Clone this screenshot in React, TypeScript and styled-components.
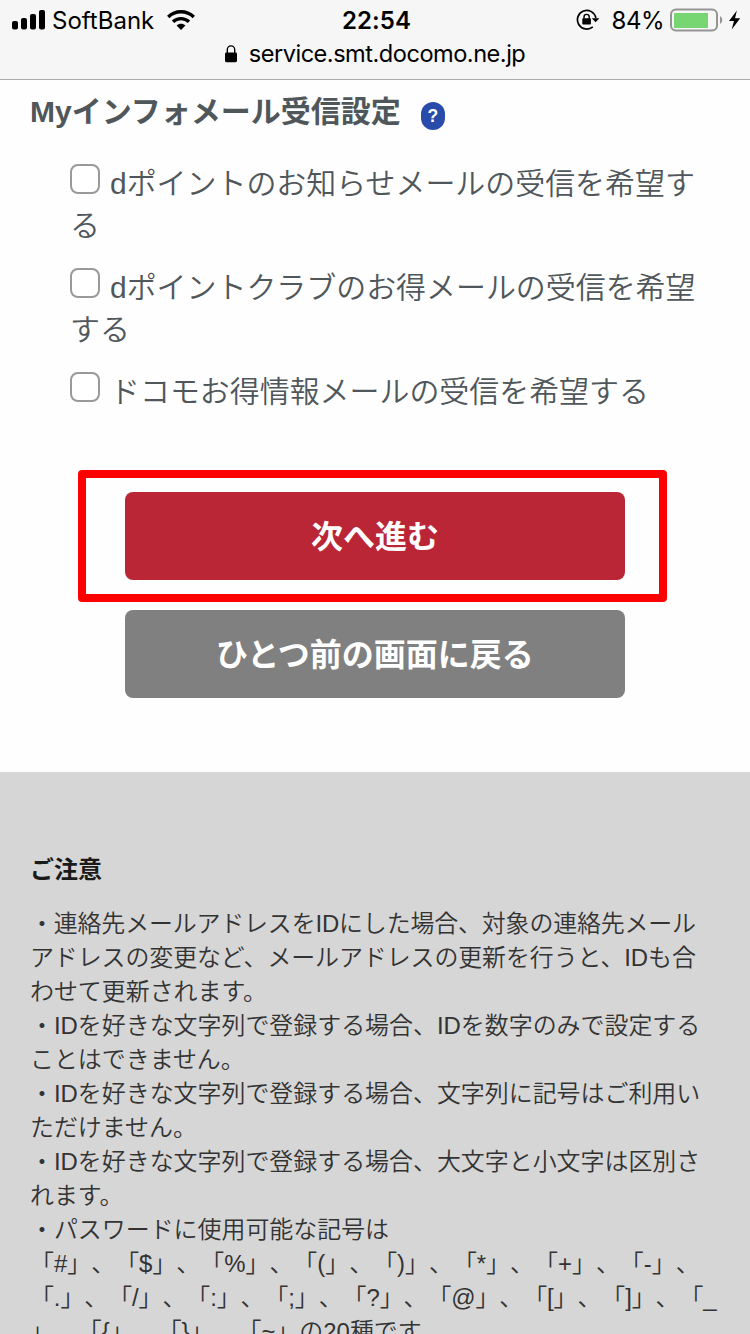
import React from "react";
import styled, { createGlobalStyle } from "styled-components";

const GlobalStyle = createGlobalStyle`
  html, body { margin: 0; padding: 0; height: 100%; overflow: hidden; }
  body { background: #fefefe; -webkit-font-smoothing: antialiased; text-spacing-trim: space-all; }
  * { box-sizing: border-box; }
`;

const Screen = styled.div`
  width: 750px;
  height: 1334px;
  overflow: hidden;
  display: flex;
  flex-direction: column;
  font-family: "Liberation Sans", "Noto Sans CJK JP", sans-serif;
  color: #50575b;
`;

const BrowserBar = styled.header`
  flex: none;
  height: 80px;
  background: #f6f6f6;
  border-bottom: 1px solid #acacac;
  color: #000;
  font-family: Inter, sans-serif;
`;

const StatusRow = styled.div`
  height: 40px;
  display: grid;
  grid-template-columns: 1fr auto 1fr;
  align-items: center;
  padding: 0 9px 0 12px;
`;

const StatusGroup = styled.div<{ $end?: boolean }>`
  display: flex;
  align-items: center;
  justify-content: ${(p) => (p.$end ? "flex-end" : "flex-start")};
`;

const Carrier = styled.span`
  font-size: 24px;
  line-height: 38px;
  padding-top: 2px;
  margin: 0 13px 0 6px;
`;

const Clock = styled.span`
  font-size: 24px;
  font-weight: 600;
  line-height: 38px;
  padding-top: 2px;
  letter-spacing: 0.1px;
`;

const Percent = styled.span`
  font-size: 24px;
  line-height: 38px;
  padding-top: 2px;
  letter-spacing: -0.5px;
  margin: 0 6px 0 12px;
`;

const AddressRow = styled.div`
  height: 28px;
  display: flex;
  align-items: center;
  justify-content: center;
  gap: 12px;
`;

const Address = styled.span`
  font-size: 23.6px;
  line-height: 28px;
  letter-spacing: -0.5px;
`;

const Form = styled.main`
  flex: none;
  height: 692px;
  padding-top: 10px;
`;

const TitleRow = styled.div`
  display: flex;
  align-items: center;
  height: 44px;
  padding-left: 30px;
`;

const Title = styled.h1`
  margin: 0;
  font-size: 30px;
  line-height: 44px;
  font-weight: 700;
  white-space: nowrap;
`;

const Help = styled.span`
  width: 24px;
  height: 28px;
  margin: 8px 0 0 20px;
  border-radius: 12px;
  background: #294ba9;
  color: #fff;
  font-size: 17.5px;
  font-weight: 700;
  line-height: 28px;
  text-align: center;
`;

const Options = styled.div`
  display: flex;
  flex-direction: column;
  gap: 20px;
  padding: 29px 50px 0 70px;
`;

const Option = styled.label`
  font-size: 29.95px;
  font-weight: 350;
  line-height: 42px;
  white-space: nowrap;
`;

const Checkbox = styled.input`
  appearance: none;
  width: 30px;
  height: 30px;
  margin: 0 10px 0 0;
  border: 2px solid #999;
  border-radius: 8px;
  background: #fff;
  vertical-align: 0;
`;

const Actions = styled.div`
  display: flex;
  flex-direction: column;
  align-items: center;
  gap: 30px;
  margin-top: 79px;
`;

const ActionSlot = styled.div`
  position: relative;
`;

const ActionButton = styled.button<{ $tone: string }>`
  display: block;
  width: 500px;
  height: 88px;
  padding: 0 0 4px;
  border: 0;
  border-radius: 8px;
  background: ${(p) => p.$tone};
  color: #fff;
  font: 700 32px/84px "Noto Sans CJK JP", sans-serif;
`;

const Highlight = styled.div`
  position: absolute;
  inset: -22px -42px -22px -47px;
  border: 8px solid #fe0000;
  border-radius: 4px;
  pointer-events: none;
`;

const Notice = styled.section`
  flex: 1;
  background: #d6d6d6;
  padding: 81px 0 0 30px;
  color: #333;
`;

const NoticeTitle = styled.h2`
  margin: 0 0 20px;
  font-size: 24px;
  line-height: 34px;
  font-weight: 700;
  color: #1a1a1a;
`;

const NoticeLine = styled.p<{ $tracking?: number }>`
  margin: 0;
  font-size: 23.95px;
  font-weight: 350;
  line-height: 34px;
  letter-spacing: ${(p) => p.$tracking ?? 0}px;
  white-space: pre;
`;

const notes: { text: string; tracking?: number }[] = [
  { text: "・連絡先メールアドレスをIDにした場合、対象の連絡先メール", tracking: -0.15 },
  { text: "アドレスの変更など、メールアドレスの更新を行うと、IDも合", tracking: -0.08 },
  { text: "わせて更新されます。" },
  { text: "・IDを好きな文字列で登録する場合、IDを数字のみで設定する" },
  { text: "ことはできません。" },
  { text: "・IDを好きな文字列で登録する場合、文字列に記号はご利用い" },
  { text: "ただけません。" },
  { text: "・IDを好きな文字列で登録する場合、大文字と小文字は区別さ" },
  { text: "れます。" },
  { text: "・パスワードに使用可能な記号は" },
  { text: "「#」、「$」、「%」、「(」、「)」、「*」、「+」、「-」、" },
  { text: "「.」、「/」、「:」、「;」、「?」、「@」、「[」、「]」、「_", tracking: -0.08 },
  { text: "」、「{」、「}」、「~」の20種です" },
];

const SignalIcon = () => (
  <svg width="34" height="22" viewBox="0 0 34 22">
    <rect x="0" y="12" width="6" height="8.5" rx="2" />
    <rect x="9" y="9" width="6" height="11.5" rx="2" />
    <rect x="18" y="5" width="6" height="15.5" rx="2" />
    <rect x="27" y="1" width="6" height="19.5" rx="2" />
  </svg>
);

const WifiIcon = () => (
  <svg width="28" height="20" viewBox="0 0 28 20">
    <g fill="none" stroke="#000" strokeWidth="3.4">
      <path d="M1.2 6.9C8.4.1 19.6.1 26.8 6.9" />
      <path d="M6 11.7c4.5-4.1 11.5-4.1 16 0" />
    </g>
    <path d="M9.6 15.5c2.5-2.2 6.3-2.2 8.8 0L14 20z" />
  </svg>
);

const RotationLockIcon = () => (
  <svg width="24" height="22" viewBox="0 0 24 22">
    <path
      d="M16.8 17.8A9.3 9.3 0 1 1 19.9 9"
      fill="none"
      stroke="#000"
      strokeWidth="1.7"
    />
    <path d="M15.8 9.3h7.6l-3.8 4z" />
    <rect x="6.3" y="9.3" width="8.6" height="6.2" rx="0.8" />
    <path d="M8 9.8V8a2.6 2.6 0 0 1 5.2 0v1.8" fill="none" stroke="#000" strokeWidth="1.4" />
  </svg>
);

const BatteryIcon = () => (
  <svg width="58" height="24" viewBox="0 0 58 24">
    <rect x="1" y="1.5" width="46" height="21" rx="5" fill="none" stroke="#949494" strokeWidth="2" />
    <rect x="4" y="5" width="34" height="15" fill="#78d672" />
    <path d="M50 8.3c3 .8 3 6.6 0 7.4z" fill="#949494" />
  </svg>
);

const BoltIcon = () => (
  <svg width="13" height="20" viewBox="0 0 13 20">
    <path d="M8.9.5 1 11h5L3.7 19.4 12.2 8.2H7z" />
  </svg>
);

const PadlockIcon = () => (
  <svg width="12" height="18" viewBox="0 0 12 18">
    <rect x="0" y="7.5" width="12" height="9.7" rx="1.4" />
    <path d="M2.3 8V4.6a3.7 3.7 0 0 1 7.4 0V8" fill="none" stroke="#000" strokeWidth="1.4" />
  </svg>
);

export default function App() {
  return (
    <>
      <GlobalStyle />
      <Screen lang="ja">
        <BrowserBar>
          <StatusRow>
            <StatusGroup>
              <SignalIcon />
              <Carrier>SoftBank</Carrier>
              <WifiIcon />
            </StatusGroup>
            <Clock>22:54</Clock>
            <StatusGroup $end>
              <RotationLockIcon />
              <Percent>84%</Percent>
              <BatteryIcon />
              <BoltIcon />
            </StatusGroup>
          </StatusRow>
          <AddressRow>
            <PadlockIcon />
            <Address>service.smt.docomo.ne.jp</Address>
          </AddressRow>
        </BrowserBar>
        <Form>
          <TitleRow>
            <Title>Myインフォメール受信設定</Title>
            <Help>?</Help>
          </TitleRow>
          <Options>
            <Option>
              <Checkbox type="checkbox" />
              dポイントのお知らせメールの受信を希望す
              <br />る
            </Option>
            <Option>
              <Checkbox type="checkbox" />
              dポイントクラブのお得メールの受信を希望
              <br />
              する
            </Option>
            <Option>
              <Checkbox type="checkbox" />
              ドコモお得情報メールの受信を希望する
            </Option>
          </Options>
          <Actions>
            <ActionSlot>
              <ActionButton $tone="#ba2636">次へ進む</ActionButton>
              <Highlight />
            </ActionSlot>
            <ActionButton $tone="#808080">ひとつ前の画面に戻る</ActionButton>
          </Actions>
        </Form>
        <Notice>
          <NoticeTitle>ご注意</NoticeTitle>
          {notes.map((note) => (
            <NoticeLine key={note.text} $tracking={note.tracking}>
              {note.text}
            </NoticeLine>
          ))}
        </Notice>
      </Screen>
    </>
  );
}
